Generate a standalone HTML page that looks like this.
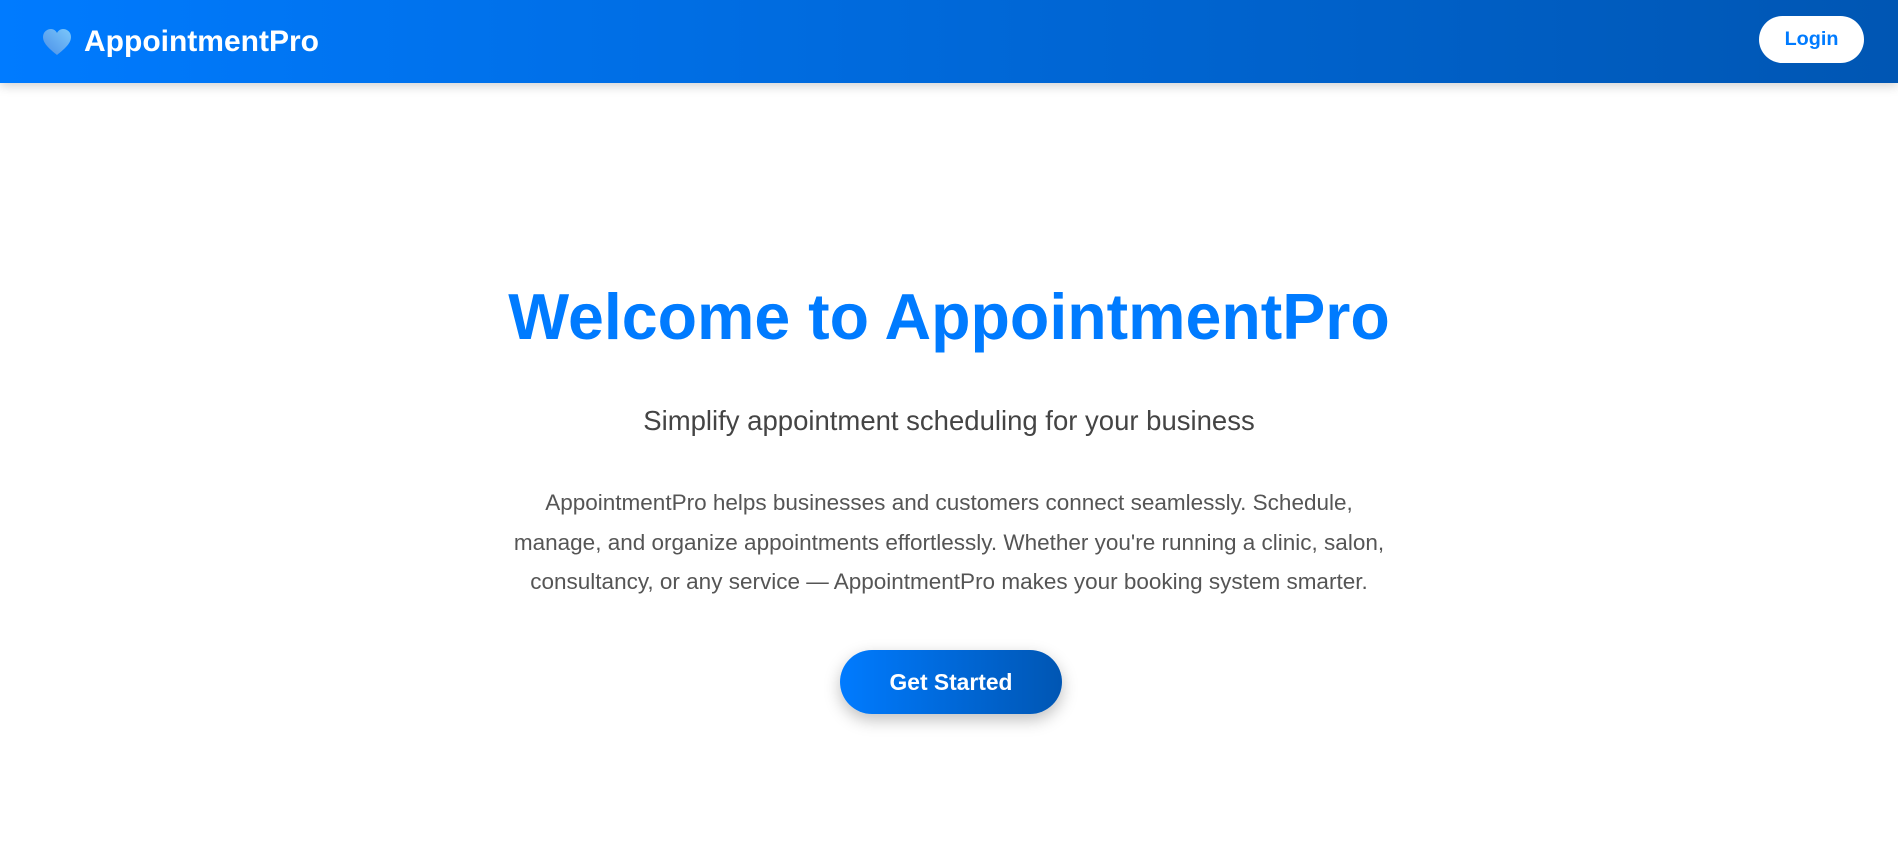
<!DOCTYPE html>
<html><head><meta charset="utf-8"><style>
*{margin:0;padding:0;box-sizing:border-box}
body{width:1898px;height:863px;background:#fff;font-family:"Liberation Sans",Arial,sans-serif;overflow:hidden;position:relative}
nav{position:absolute;left:0;top:0;width:1898px;height:83px;background:linear-gradient(90deg,#007bff,#0056b3);box-shadow:0 3px 10px rgba(0,0,0,.18);}
.logo{position:absolute;left:42px;top:22px;color:#fff;font-weight:bold;font-size:30px;display:flex;align-items:center;height:40px}
.logo svg{margin-right:12px}
.login{position:absolute;left:1759px;top:16px;width:105px;height:47px;border-radius:24px;background:#fff;color:#007bff;font-weight:bold;font-size:19.8px;display:flex;align-items:center;justify-content:center}
h1{position:absolute;left:0;width:1898px;top:277px;text-align:center;color:#007bff;font-size:64.5px;font-weight:bold;line-height:80px}
.sub{position:absolute;left:0;width:1898px;top:406px;text-align:center;color:#444;font-size:27.5px;line-height:30px}
.p{position:absolute;left:0;width:1898px;top:483px;text-align:center;color:#555;font-size:22.5px;line-height:39.5px;white-space:nowrap}
.btn{position:absolute;left:840px;top:650px;width:222px;height:64px;border-radius:32px;background:linear-gradient(90deg,#007bff,#0056b3);color:#fff;font-weight:bold;font-size:22.8px;display:flex;align-items:center;justify-content:center;box-shadow:0 6px 16px rgba(0,0,0,.25)}
</style></head><body>
<nav>
<div class="logo"><svg width="30" height="28" viewBox="0 0 30 28"><defs><linearGradient id="g" x1="0" y1="1" x2="1" y2="0"><stop offset="0" stop-color="#4a8fe8"/><stop offset="1" stop-color="#7cc8fb"/></linearGradient></defs><path d="M15 27 C9 22 1 16 1 9 C1 4 5 1 9 1 C12 1 14 3 15 5 C16 3 18 1 21 1 C25 1 29 4 29 9 C29 16 21 22 15 27Z" fill="url(#g)"/></svg>AppointmentPro</div>
<div class="login">Login</div>
</nav>
<h1>Welcome to AppointmentPro</h1>
<div class="sub">Simplify appointment scheduling for your business</div>
<div class="p">AppointmentPro helps businesses and customers connect seamlessly. Schedule,<br>manage, and organize appointments effortlessly. Whether you're running a clinic, salon,<br>consultancy, or any service — AppointmentPro makes your booking system smarter.</div>
<div class="btn">Get Started</div>
</body></html>
